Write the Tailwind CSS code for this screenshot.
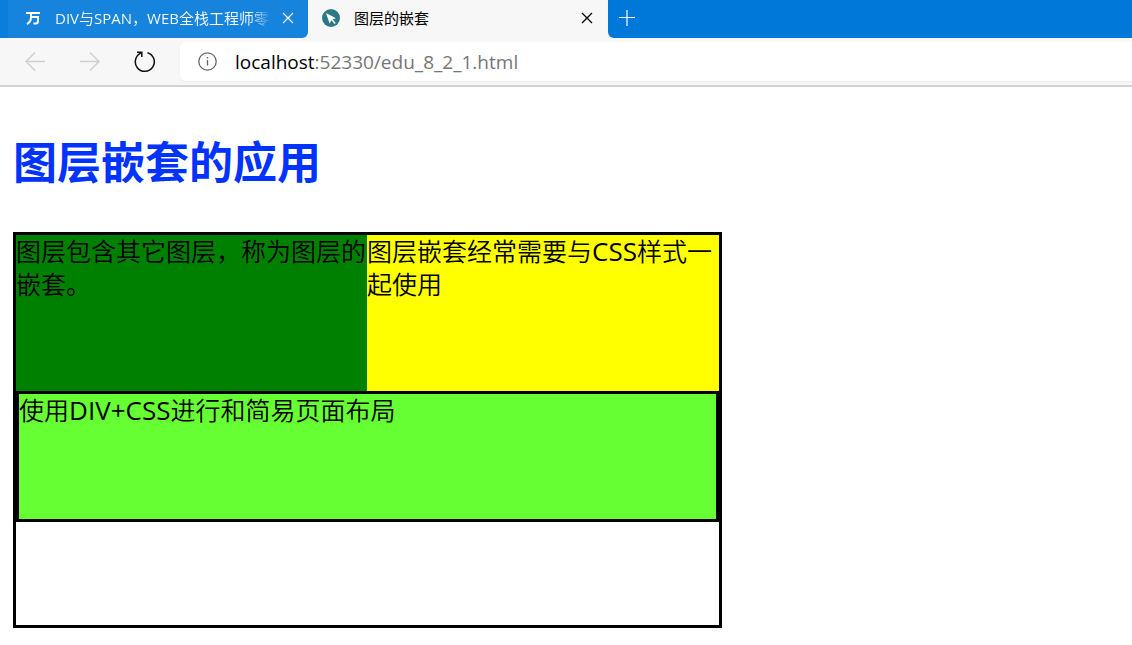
<!DOCTYPE html>
<html lang="zh-CN">
<head>
<meta charset="utf-8">
<meta name="viewport" content="width=device-width, initial-scale=1">
<title>图层的嵌套</title>
<script src="https://cdn.jsdelivr.net/npm/@tailwindcss/browser@4"></script>
</head>
<body class="bg-white text-black font-['Open_Sans','Noto_Sans_CJK_SC',sans-serif]">
<header>
  <div class="flex h-[38px] bg-[#0078d9]" role="tablist">
    <div class="w-2 shrink-0 bg-[#0b7dda]"></div>
    <div class="flex w-[300px] shrink-0 bg-[#f7f7f7]">
      <div class="flex w-full items-center rounded-br-md bg-[#1683dc] pb-[2px] pl-[18px] pr-[14px] text-white">
        <svg class="size-[14px] shrink-0" viewBox="0 0 14 14" fill="none" stroke="currentColor" stroke-width="2" aria-hidden="true"><path d="M0 2H14M5 2V6Q5 11 1 13M5 6H12V10Q12 12.500 10 12.500H7.500"/></svg>
        <button role="tab" class="ml-[15px] min-w-0 flex-1 overflow-hidden whitespace-nowrap bg-linear-to-r from-white from-90% to-transparent bg-clip-text text-left text-[15px] leading-6 text-transparent">DIV与SPAN，WEB全栈工程师零基础</button>
        <button class="ml-[10px] size-3 shrink-0" aria-label="关闭标签页"><svg class="size-3" viewBox="0 0 12 12" fill="none" stroke="currentColor" stroke-width="1.200"><path d="M1 1L11 11M11 1L1 11"/></svg></button>
      </div>
    </div>
    <div class="flex w-[300px] shrink-0 items-center bg-[#f7f7f7] pb-[2px] pl-[14px] pr-[15px]">
      <svg class="size-[18px] shrink-0" viewBox="0 0 18 18" aria-hidden="true"><circle cx="9" cy="9" r="9" fill="#2d7887"/><path d="M4 4L14 9.300L10.600 10.200L13.700 14L12.600 15L9.500 11.300L7.600 14.500Z" fill="#fff"/></svg>
      <button role="tab" aria-selected="true" class="ml-[14px] flex-1 text-left text-[15px] leading-6">图层的嵌套</button>
      <button class="size-3 shrink-0" aria-label="关闭标签页"><svg class="size-3" viewBox="0 0 12 12" fill="none" stroke="currentColor" stroke-width="1.300"><path d="M1 1L11 11M11 1L1 11"/></svg></button>
    </div>
    <div class="flex-1 bg-[#f7f7f7]">
      <div class="h-full rounded-bl-md bg-[#0078d9] pl-[10px] pt-[9px] text-white">
        <button class="block size-[18px]" aria-label="新建标签页"><svg class="size-[18px]" viewBox="0 0 18 18" fill="none" stroke="currentColor" stroke-width="1.200"><path d="M9 1V17M1 8.500H17"/></svg></button>
      </div>
    </div>
  </div>
  <div class="flex h-[49px] items-start border-b-2 border-[#d2d2d2] bg-[#f7f7f7] pl-6 pt-1">
    <div class="flex h-[39px] w-[156px] shrink-0 items-center gap-[33px]">
      <button class="text-[#cfcfcf]" aria-label="后退"><svg class="size-[22px]" viewBox="0 0 22 22" fill="none" stroke="currentColor" stroke-width="1.400"><path d="M21 10.500H2M11 1.500L2 10.500L11 19.500"/></svg></button>
      <button class="text-[#cfcfcf]" aria-label="前进"><svg class="size-[22px]" viewBox="0 0 22 22" fill="none" stroke="currentColor" stroke-width="1.400"><path d="M1 10.500H20M11 1.500L20 10.500L11 19.500"/></svg></button>
      <button class="text-[#111111]" aria-label="刷新"><svg class="size-[22px]" viewBox="0 0 22 22" fill="none" stroke="currentColor" stroke-width="1.500"><path d="M13.500 1.700A9.500 9.500 0 1 1 7.500 1.900M3 1.200H7.800V6"/></svg></button>
    </div>
    <div class="flex h-[39px] flex-1 items-center rounded-l-md bg-white pl-[18px] shadow-xs">
      <svg class="size-[19px] shrink-0 text-[#666666]" viewBox="0 0 19 19" fill="none" stroke="currentColor" stroke-width="1.300" aria-hidden="true"><circle cx="9.500" cy="9.500" r="8.700"/><path d="M9.500 8V13.500M9.500 5V6.500"/></svg>
      <button class="ml-[18px] text-left text-[19px] leading-7 text-[#767676]" aria-label="地址栏"><span class="text-black">localhost</span>:52330/edu_8_2_1.html</button>
    </div>
  </div>
</header>
<main class="px-[13px]">
  <h1 class="pt-[46px] text-[44px] font-bold leading-[58px] text-[#0033ff]">图层嵌套的应用</h1>
  <section class="mt-[41px] min-h-[396px] w-[709px] border-3 border-black text-[25px] font-[350] leading-[33px]">
    <div class="grid min-h-[156px] grid-cols-[351px_1fr]">
      <div class="bg-[#008000]">图层包含其它图层，称为图层的嵌套。</div>
      <div class="bg-[#ffff00]">图层嵌套经常需要与<span class="text-[26px] font-normal">CSS</span>样式一起使用</div>
    </div>
    <div class="min-h-[131px] border-3 border-black bg-[#66ff33]">使用<span class="text-[26px] font-normal">DIV+CSS</span>进行和简易页面布局</div>
  </section>
</main>
</body>
</html>
